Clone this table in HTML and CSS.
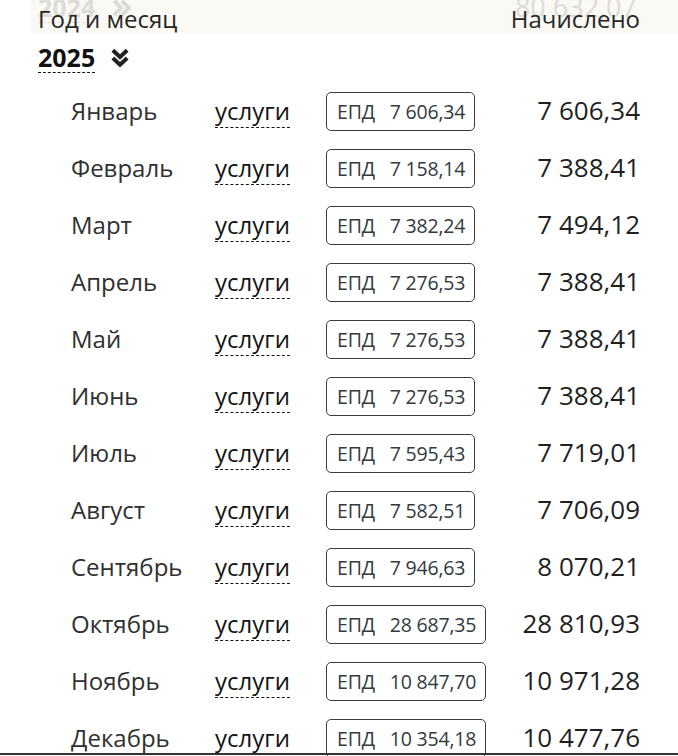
FILE: index.html
```html
<!DOCTYPE html>
<html lang="ru">
<head>
<meta charset="utf-8">
<title>Начисления</title>
<link rel="stylesheet" href="styles.css">
</head>
<body>
<div class="page">
  <div class="list">
    <div class="year-row ghost">
      <span class="year">2024</span>
      <svg class="chev chev-right" width="18" height="20" viewBox="0 0 18 20"><path d="M1.8 2.2 L9 9 L16.2 2.2 M1.8 10 L9 16.8 L16.2 10" fill="none" stroke="currentColor" stroke-width="4"/></svg>
      <span class="year-sum">80 632,07</span>
    </div>
    <div class="year-row">
      <span class="year">2025</span>
      <svg class="chev" width="18" height="20" viewBox="0 0 18 20"><path d="M1.8 2.2 L9 9 L16.2 2.2 M1.8 10 L9 16.8 L16.2 10" fill="none" stroke="currentColor" stroke-width="4"/></svg>
    </div>

    <div class="row"><span class="month">Январь</span><span class="cell-svc"><span class="svc">услуги</span></span><span class="epd"><span class="epd-l">ЕПД</span><span>7 606,34</span></span><span class="sum">7 606,34</span></div>
    <div class="row"><span class="month">Февраль</span><span class="cell-svc"><span class="svc">услуги</span></span><span class="epd"><span class="epd-l">ЕПД</span><span>7 158,14</span></span><span class="sum">7 388,41</span></div>
    <div class="row"><span class="month">Март</span><span class="cell-svc"><span class="svc">услуги</span></span><span class="epd"><span class="epd-l">ЕПД</span><span>7 382,24</span></span><span class="sum">7 494,12</span></div>
    <div class="row"><span class="month">Апрель</span><span class="cell-svc"><span class="svc">услуги</span></span><span class="epd"><span class="epd-l">ЕПД</span><span>7 276,53</span></span><span class="sum">7 388,41</span></div>
    <div class="row"><span class="month">Май</span><span class="cell-svc"><span class="svc">услуги</span></span><span class="epd"><span class="epd-l">ЕПД</span><span>7 276,53</span></span><span class="sum">7 388,41</span></div>
    <div class="row"><span class="month">Июнь</span><span class="cell-svc"><span class="svc">услуги</span></span><span class="epd"><span class="epd-l">ЕПД</span><span>7 276,53</span></span><span class="sum">7 388,41</span></div>
    <div class="row"><span class="month">Июль</span><span class="cell-svc"><span class="svc">услуги</span></span><span class="epd"><span class="epd-l">ЕПД</span><span>7 595,43</span></span><span class="sum">7 719,01</span></div>
    <div class="row"><span class="month">Август</span><span class="cell-svc"><span class="svc">услуги</span></span><span class="epd"><span class="epd-l">ЕПД</span><span>7 582,51</span></span><span class="sum">7 706,09</span></div>
    <div class="row"><span class="month">Сентябрь</span><span class="cell-svc"><span class="svc">услуги</span></span><span class="epd"><span class="epd-l">ЕПД</span><span>7 946,63</span></span><span class="sum">8 070,21</span></div>
    <div class="row"><span class="month">Октябрь</span><span class="cell-svc"><span class="svc">услуги</span></span><span class="epd"><span class="epd-l">ЕПД</span><span>28 687,35</span></span><span class="sum">28 810,93</span></div>
    <div class="row"><span class="month">Ноябрь</span><span class="cell-svc"><span class="svc">услуги</span></span><span class="epd"><span class="epd-l">ЕПД</span><span>10 847,70</span></span><span class="sum">10 971,28</span></div>
    <div class="row"><span class="month">Декабрь</span><span class="cell-svc"><span class="svc">услуги</span></span><span class="epd"><span class="epd-l">ЕПД</span><span>10 354,18</span></span><span class="sum">10 477,76</span></div>
  </div>

  <div class="head">
    <span>Год и месяц</span>
    <span>Начислено</span>
  </div>
</div>
<div class="bottom-line"></div>
</body>
</html>
```

FILE: styles.css
```css
html, body {
  margin: 0;
  padding: 0;
  background: #ffffff;
}
body {
  font-family: "Open Sans", "Noto Sans", sans-serif;
  color: #2b2b2b;
  overflow: hidden;
  height: 756px;
}
.page {
  position: relative;
  display: flow-root;
  margin-left: 30px;
  padding: 0 38px 0 8px;
}
.head {
  position: absolute;
  top: 0;
  left: 0;
  right: 0;
  height: 33px;
  box-sizing: border-box;
  padding: 3px 38px 0 8px;
  display: flex;
  justify-content: space-between;
  font-size: 24px;
  line-height: 31px;
  color: #262626;
  background: rgba(247, 245, 237, 0.62);
  overflow: hidden;
}
.list {
  margin-top: -17px;
}
.year-row {
  height: 50px;
  box-sizing: border-box;
  padding-top: 9px;
  display: flex;
  align-items: baseline;
  color: #111;
}
.year {
  font-size: 25px;
  line-height: 30px;
  font-weight: 700;
  border-bottom: 1px dashed #111;
}
.chev {
  margin-left: 16px;
  color: #222;
  position: relative;
  top: 1px;
}
.ghost {
  color: #b0b0b0;
}
.ghost .year {
  border-bottom-color: #b0b0b0;
}
.ghost .chev {
  color: #b0b0b0;
  margin-left: 18px;
}
.chev-right {
  transform: rotate(-90deg);
}
.year-sum {
  margin-left: auto;
  margin-right: 3px;
  font-size: 27px;
  line-height: 30px;
}
.row {
  height: 57px;
  display: grid;
  grid-template-columns: 144px 111px auto 1fr;
  align-items: center;
  padding-left: 33px;
}
.month {
  font-size: 24px;
  color: #303030;
  margin-top: -3px;
}
.cell-svc {
  margin-top: -3px;
}
.svc {
  font-size: 24px;
  color: #141414;
  border-bottom: 1px dashed #141414;
}
.epd {
  display: flex;
  align-items: center;
  gap: 15px;
  height: 39px;
  box-sizing: border-box;
  padding: 0 9px 0 10px;
  border: 1px solid #3c3c3c;
  border-radius: 5px;
  font-size: 19.5px;
  letter-spacing: -0.2px;
  color: #333a40;
}
.sum {
  justify-self: end;
  font-size: 26px;
  color: #1f1f1f;
  margin-top: -3px;
}
.bottom-line {
  position: fixed;
  left: 0;
  right: 0;
  bottom: 1px;
  height: 2px;
  background: #333;
}
```
